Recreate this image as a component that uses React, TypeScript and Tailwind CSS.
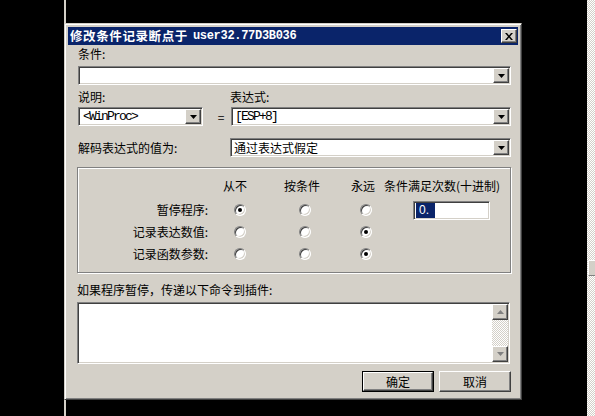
const sunken =
  "bg-white border border-t-[#808080] border-l-[#808080] border-b-white border-r-white shadow-[inset_1px_1px_0_#404040,inset_-1px_-1px_0_#d4d0c8] p-[1px]";
const raised =
  "bg-[#d4d0c8] border border-t-white border-l-white border-b-[#404040] border-r-[#404040] shadow-[inset_-1px_-1px_0_#808080]";
const mono = "font-[family-name:'Liberation_Mono',monospace]";
const checker =
  "bg-[image:repeating-conic-gradient(#ffffff_0%_25%,#d4d0c8_0%_50%)] bg-[length:2px_2px]";

function Arrow({ up = false, color = "#000" }: { up?: boolean; color?: string }) {
  return (
    <svg width="7" height="4" viewBox="0 0 7 4">
      <path d={up ? "M0 4h7L3.5 0z" : "M0 0h7L3.5 4z"} fill={color} />
    </svg>
  );
}

function Combo({ children, className = "" }: { children?: React.ReactNode; className?: string }) {
  return (
    <div className={`${sunken} h-[19px] flex ${className}`}>
      <div className="flex-1 flex items-center pl-[2px] overflow-hidden whitespace-nowrap leading-[13px]">
        {children}
      </div>
      <div className={`${raised} w-[16px] flex items-center justify-center`}>
        <Arrow />
      </div>
    </div>
  );
}

function Radio({ checked = false }: { checked?: boolean }) {
  return (
    <div className="w-[12px] h-[12px] rounded-full bg-white border border-t-[#808080] border-l-[#808080] border-b-white border-r-white shadow-[inset_1px_1px_0_#404040,inset_-1px_-1px_0_#d4d0c8] flex items-center justify-center">
      {checked && <div className="w-[4px] h-[4px] rounded-full bg-black" />}
    </div>
  );
}

function OptionRow({ label, pick, count }: { label: string; pick: number; count?: boolean }) {
  return (
    <div className="h-[22px] flex items-center">
      <div className="w-[134px] pr-[4px] text-right">{label}</div>
      <div className="w-[56px] flex justify-center">
        <Radio checked={pick === 0} />
      </div>
      <div className="w-[74px] flex justify-center">
        <Radio checked={pick === 1} />
      </div>
      <div className="w-[48px] flex justify-center">
        <Radio checked={pick === 2} />
      </div>
      {count && (
        <div className={`${sunken} ml-[23px] w-[77px] h-[19px] flex items-center pl-[2px]`}>
          <span className="bg-[#0a246a] text-white h-[15px] w-[19px] leading-[15px] pl-[3px] font-[family-name:'Liberation_Sans',sans-serif]">
            0.
          </span>
        </div>
      )}
    </div>
  );
}

export default function App() {
  return (
    <div className="relative w-[595px] h-[416px] overflow-hidden bg-black text-[12px] leading-[12px] text-black font-[family-name:'Noto_Sans_CJK_SC',sans-serif]">
      {/* edge of the window behind */}
      <div className="absolute left-[64px] top-0 h-full w-[2px] bg-[#d4d0c8]" />
      <div className={`absolute right-0 top-0 h-full w-[8px] ${checker}`} />
      <div className="absolute right-0 top-[260px] w-[7px] h-[16px] bg-[#d4d0c8] border border-t-white border-l-white border-b-[#808080] border-r-0" />

      {/* dialog */}
      <div className="absolute left-[64px] top-[23px] w-[458px] h-[377px] bg-[#d4d0c8] border border-t-[#d4d0c8] border-l-[#d4d0c8] border-b-[#404040] border-r-[#404040] shadow-[inset_1px_1px_0_#fff,inset_-1px_-1px_0_#808080] p-[3px] flex flex-col">
        <div className="h-[18px] bg-[#0a246a] flex items-center pl-[2px] pr-[1px] text-white font-bold">
          <span className="text-[12.5px] tracking-[0.6px]">修改条件记录断点于</span>
          <span className={`${mono} ml-[5px] text-[12px] tracking-[-0.3px]`}>user32.77D3B036</span>
          <div className={`${raised} ml-auto w-[16px] h-[14px] flex items-center justify-center`}>
            <svg width="8" height="7" viewBox="0 0 8 7">
              <path d="M0 0h2l2 2.5L6 0h2L5 3.5 8 7H6L4 4.5 2 7H0l3-3.5z" fill="#000" />
            </svg>
          </div>
        </div>

        <div className="flex flex-col pl-[10px] pr-[7px]">
          <div className="mt-[3px] h-[12px]">条件:</div>
          <Combo className="mt-[6px]" />

          <div className="mt-[6px] h-[12px] flex">
            <div className="w-[152px]">说明:</div>
            <div>表达式:</div>
          </div>
          <div className="mt-[4px] flex items-center">
            <Combo className="w-[125px]">
              <span className={`${mono} text-[13px] tracking-[-1.8px] ml-[1px]`}>&lt;WinProc&gt;</span>
            </Combo>
            <div className="w-[28px] pl-[8px] text-center">=</div>
            <Combo className="flex-1">
              <span className={`${mono} text-[13px] tracking-[-1.8px]`}>[ESP+8]</span>
            </Combo>
          </div>

          <div className="mt-[12px] flex items-center">
            <div className="w-[152px]">解码表达式的值为:</div>
            <Combo className="flex-1">通过表达式假定</Combo>
          </div>

          <div className="mt-[10px] -ml-[1px] h-[106px] border border-[#808080] shadow-[inset_1px_1px_0_#fff,1px_1px_0_#fff] pt-[11px] flex flex-col">
            <div className="h-[14px] flex items-center">
              <div className="w-[133px]" />
              <div className="w-[48px] text-center">从不</div>
              <div className="w-[86px] text-center">按条件</div>
              <div className="w-[36px] text-center">永远</div>
              <div className="ml-[3px]">条件满足次数(十进制)</div>
            </div>
            <div className="mt-[6px]">
              <OptionRow label="暂停程序:" pick={0} count />
              <OptionRow label="记录表达数值:" pick={2} />
              <OptionRow label="记录函数参数:" pick={2} />
            </div>
          </div>

          <div className="mt-[11px] -ml-[1px] h-[12px]">如果程序暂停，传递以下命令到插件:</div>
          <div className={`${sunken} mt-[6px] -ml-[1px] w-[433px] h-[62px] flex justify-end`}>
            <div className="w-[16px] flex flex-col">
              <div className={`${raised} h-[16px] flex items-center justify-center`}>
                <Arrow up color="#808080" />
              </div>
              <div className={`flex-1 ${checker}`} />
              <div className={`${raised} h-[16px] flex items-center justify-center`}>
                <Arrow color="#808080" />
              </div>
            </div>
          </div>

          <div className="mt-[7px] flex justify-end gap-[5px]">
            <div className="border border-black">
              <div className={`${raised} w-[70px] h-[19px] flex items-center justify-center`}>确定</div>
            </div>
            <div className={`${raised} w-[72px] h-[21px] flex items-center justify-center`}>取消</div>
          </div>
        </div>
      </div>
    </div>
  );
}
